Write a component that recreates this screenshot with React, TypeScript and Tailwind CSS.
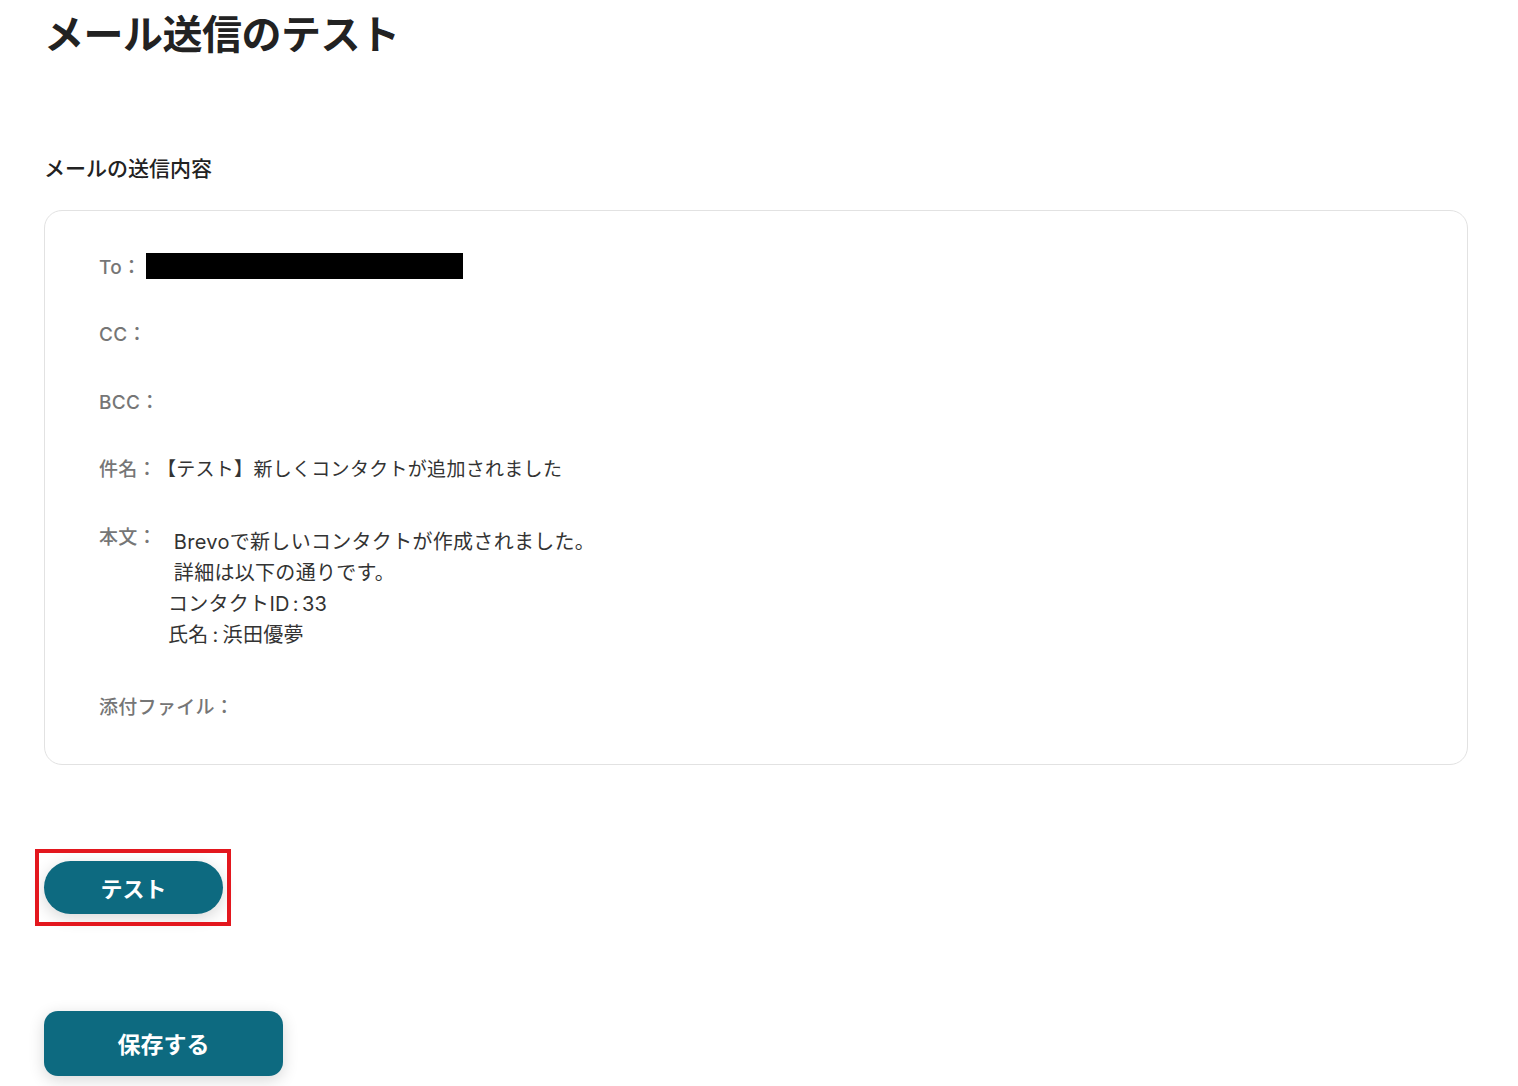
const font = { fontFamily: '"Noto Sans CJK JP", "Noto Sans", sans-serif' }
const mixed = { fontFamily: 'Inter, "Noto Sans CJK JP", sans-serif' }

const Row = ({ label, children }: { label: string; children?: React.ReactNode }) => (
  <div className="flex items-start leading-[30px]">
    <span className="text-[19px] font-medium tracking-[0.3px] text-[#767676] whitespace-nowrap" style={mixed}>
      {label}
    </span>
    {children}
  </div>
)

const App = () => {
  return (
    <div className="min-h-[1086px] bg-white pl-[44px] pr-[50px] pt-[8px] text-[#333]" style={font}>
      <h1 className="text-[40px] font-bold leading-[48px] text-[#222] tracking-[-0.5px]">
        メール送信のテスト
      </h1>

      <h2 className="mt-[96px] text-[21px] font-medium leading-[30px] text-[#222]">
        メールの送信内容
      </h2>

      <div className="mt-[28px] rounded-[18px] border border-[#e2e2e2] px-[54px] pt-[41.5px] pb-[41px]">
        <div className="flex flex-col gap-[37.5px]">
          <Row label="To：">
            <div className="ml-[5px] h-[26px] w-[317px] bg-black" />
          </Row>
          <Row label="CC：" />
          <Row label="BCC：" />
          <Row label="件名：">
            <span className="text-[19px] tracking-[0.3px] text-[#333]" style={mixed}>
              【テスト】新しくコンタクトが追加されました
            </span>
          </Row>
          <Row label="本文：">
            <div
              className="ml-[11px] mt-[4px] text-[20px] leading-[31.3px] tracking-[0.3px] text-[#333] whitespace-pre"
              style={mixed}
            >
              <div>{' Brevoで新しいコンタクトが作成されました。'}</div>
              <div>{' 詳細は以下の通りです。'}</div>
              <div>
                コンタクトID<span className="mx-[3px]">:</span>33
              </div>
              <div>
                氏名<span className="mx-[4px]">:</span>浜田優夢
              </div>
            </div>
          </Row>
          <div className="mt-[4px]">
            <Row label="添付ファイル：" />
          </div>
        </div>
      </div>

      <div className="mt-[96px] relative w-[179px]">
        <button className="flex h-[53px] w-[179px] items-center justify-center rounded-full bg-[#0d6a80] text-[22px] font-bold text-white shadow-[0_4px_16px_rgba(0,0,0,0.16)]">
          テスト
        </button>
        <div className="pointer-events-none absolute -left-[9px] -right-[8px] -top-[12px] -bottom-[12px] border-4 border-[#e3171e]" />
      </div>

      <button className="mt-[97px] flex h-[65px] w-[239px] items-center justify-center rounded-[14px] bg-[#0d6a80] text-[23px] font-bold text-white shadow-[0_4px_16px_rgba(0,0,0,0.16)]">
        保存する
      </button>
    </div>
  )
}

export default App
